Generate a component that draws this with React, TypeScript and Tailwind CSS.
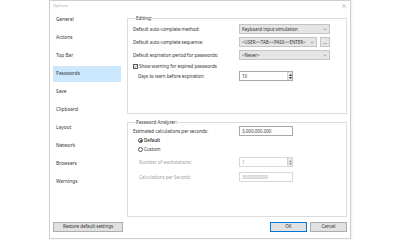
import React from 'react';

const font = { fontFamily: '"Noto Sans", "Open Sans", sans-serif' };

const navItems = ['General', 'Actions', 'Top Bar', 'Passwords', 'Save', 'Clipboard', 'Layout', 'Network', 'Browsers', 'Warnings'];

const Chevron: React.FC = () => (
  <svg width="4" height="3" viewBox="0 0 4 3" className="shrink-0">
    <path d="M0.5 0.8 L2 2.2 L3.5 0.8" fill="none" stroke="#777" strokeWidth="0.6" />
  </svg>
);

const Select: React.FC<{ value: string; className?: string }> = ({ value, className = 'w-[91px]' }) => (
  <div className={`${className} h-[10px] border border-[#c4c4c4] bg-[#e5e5e5] flex items-center justify-between pl-[2px] pr-[2px] text-[4.5px] text-[#333]`}>
    <span className="truncate">{value}</span>
    <Chevron />
  </div>
);

const Spin: React.FC<{ disabled?: boolean }> = ({ disabled }) => (
  <div className="w-[5px] h-full flex flex-col items-center justify-center gap-[1px] bg-[#e8e8e8] border-l border-[#d4d4d4]">
    <svg width="3" height="2" viewBox="0 0 3 2"><path d="M0 2 L1.5 0 L3 2 Z" fill={disabled ? '#999' : '#333'} /></svg>
    <svg width="3" height="2" viewBox="0 0 3 2"><path d="M0 0 L1.5 2 L3 0 Z" fill={disabled ? '#999' : '#333'} /></svg>
  </div>
);

const Input: React.FC<{ value: string; spin?: boolean; disabled?: boolean; h?: string }> = ({ value, spin, disabled, h = 'h-[10px]' }) => (
  <div className={`w-[54px] ${h} border ${disabled ? 'border-[#d8d8d8] text-[#9a9a9a]' : 'border-[#a8a8a8] text-[#333]'} bg-white flex items-center text-[4.5px]`}>
    <span className="flex-1 pl-[2px] truncate">{value}</span>
    {spin && <Spin disabled={disabled} />}
  </div>
);

const Radio: React.FC<{ checked?: boolean }> = ({ checked }) => (
  <div className="w-[5px] h-[5px] rounded-full border border-[#555] bg-white flex items-center justify-center">
    {checked && <div className="w-[2px] h-[2px] rounded-full bg-[#222]" />}
  </div>
);

export default function App() {
  return (
    <div className="w-[400px] h-[240px] bg-white overflow-hidden text-[#333]" style={font}>
      <div className="ml-[49px] w-[302px] h-[239px] border border-[#cfcfcf] bg-white flex flex-col shadow-[1px_0_2px_rgba(0,0,0,0.08)]">
        {/* Title bar */}
        <div className="h-[10px] flex items-center justify-between pl-[3px] pr-[4px]">
          <span className="text-[4px] text-[#a8a8a8]">Options</span>
          <svg width="4" height="4" viewBox="0 0 4 4">
            <path d="M0.3 0.3 L3.7 3.7 M3.7 0.3 L0.3 3.7" stroke="#999" strokeWidth="0.6" />
          </svg>
        </div>

        <div className="flex-1 flex pl-[3px] pr-[3px] gap-[6px]">
          {/* Nav */}
          <div className="w-[68px] flex flex-col gap-[2px] pt-[1px]">
            {navItems.map(item => (
              <div
                key={item}
                className={`h-[16px] flex items-center pl-[3px] text-[4.8px] text-[#333] ${item === 'Passwords' ? 'bg-[#cce8ff]' : ''}`}
              >
                {item}
              </div>
            ))}
          </div>

          {/* Settings */}
          <div className="flex-1 flex flex-col gap-[5px] pt-[4px]">
            <fieldset className="h-[99px] border border-[#dcdcdc] pl-[5px] pr-[3px]">
              <legend className="ml-[3px] text-[4.5px] leading-[6px] text-[#333]">Editing:</legend>
              <div className="flex flex-col text-[4.5px] mt-[3px]">
                <div className="h-[10px] flex items-center">
                  <span className="w-[106px]">Default auto-complete method:</span>
                  <Select value="Keyboard input simulation" />
                </div>
                <div className="h-[10px] mt-[3px] flex items-center">
                  <span className="w-[106px]">Default auto-complete sequence:</span>
                  <Select value="<USER><TAB><PASS><ENTER>" className="w-[78px]" />
                  <div className="ml-[3px] w-[10px] h-[10px] border border-[#c4c4c4] bg-[#e5e5e5] flex items-center justify-center text-[4.5px] leading-none">...</div>
                </div>
                <div className="h-[10px] mt-[3px] flex items-center">
                  <span className="w-[106px]">Default expiration period for passwords:</span>
                  <Select value="<Never>" />
                </div>
                <div className="h-[8px] mt-[2px] flex items-center gap-[1px]">
                  <div className="w-[5px] h-[5px] border border-[#555] bg-white flex items-center justify-center">
                    <svg width="3" height="3" viewBox="0 0 3 3"><path d="M0.3 1.5 L1.2 2.4 L2.7 0.6" fill="none" stroke="#222" strokeWidth="0.5" /></svg>
                  </div>
                  <span>Show warning for expired passwords</span>
                </div>
                <div className="h-[10px] mt-[1px] flex items-center">
                  <span className="w-[106px] pl-[5px]">Days to warn before expiration:</span>
                  <Input value="10" spin />
                </div>
              </div>
            </fieldset>

            <fieldset className="h-[98px] border border-[#dcdcdc] pl-[5px] pr-[3px]">
              <legend className="ml-[3px] text-[4.5px] leading-[6px] text-[#333]">Password Analyzer:</legend>
              <div className="flex flex-col text-[4.5px] mt-[1px]">
                <div className="h-[10px] flex items-center">
                  <span className="w-[106px]">Estimated calculations per seconds:</span>
                  <Input value="3,000,000,000" />
                </div>
                <div className="h-[9px] flex items-center gap-[1px] pl-[5px]">
                  <Radio checked />
                  <span className="font-semibold">Default</span>
                </div>
                <div className="h-[9px] flex items-center gap-[1px] pl-[5px]">
                  <Radio />
                  <span>Custom</span>
                </div>
                <div className="h-[10px] mt-[3px] flex items-center text-[#a0a0a0]">
                  <span className="w-[106px] pl-[6px]">Number of workstations:</span>
                  <Input value="1" spin disabled />
                </div>
                <div className="h-[10px] mt-[5px] flex items-center text-[#a0a0a0]">
                  <span className="w-[106px] pl-[6px]">Calculations per Second:</span>
                  <Input value="3000000000" disabled />
                </div>
              </div>
            </fieldset>
          </div>
        </div>

        {/* Footer */}
        <div className="h-[20px] flex items-center justify-between pl-[3px] pr-[3px] pb-[3px]">
          <div className="w-[70px] h-[10px] border border-[#adadad] bg-[#e1e1e1] flex items-center justify-center text-[4.5px]">Restore default settings</div>
          <div className="flex gap-[3px]">
            <div className="w-[37px] h-[10px] border border-[#0078d7] bg-[#e1e1e1] flex items-center justify-center text-[4.5px]">OK</div>
            <div className="w-[37px] h-[10px] border border-[#adadad] bg-[#e1e1e1] flex items-center justify-center text-[4.5px]">Cancel</div>
          </div>
        </div>
      </div>
    </div>
  );
}
